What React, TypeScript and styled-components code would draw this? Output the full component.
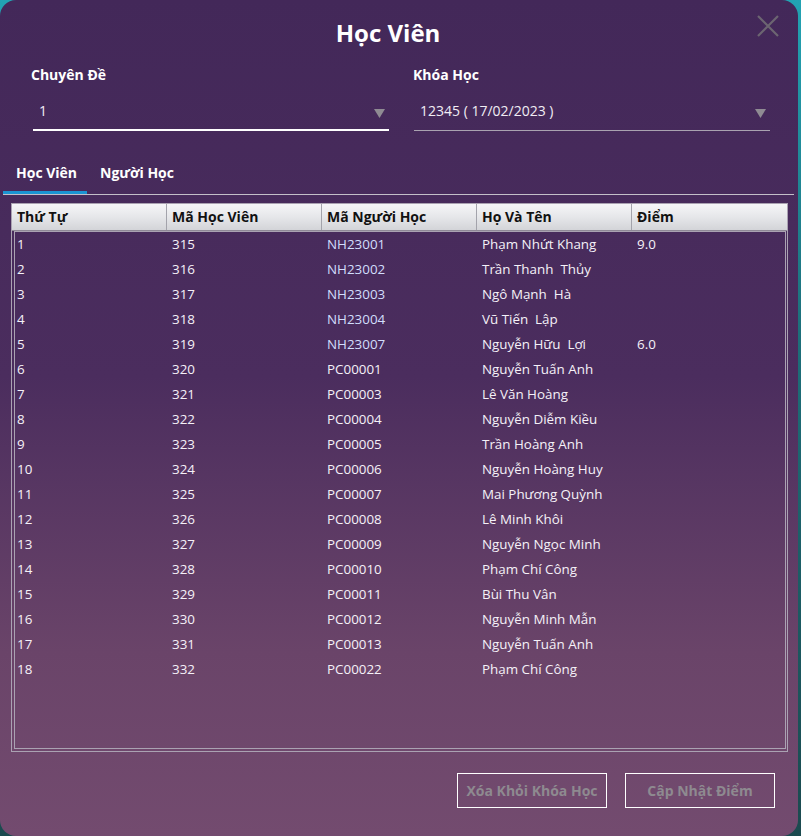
import React from 'react';
import styled, { createGlobalStyle } from 'styled-components';

const GlobalStyle = createGlobalStyle`
  html, body {
    margin: 0;
    padding: 0;
  }
  body {
    background: linear-gradient(180deg, #22a3b3 0%, #1d6f7a 40%, #1b4a4f 100%);
    font-family: "Open Sans", "Noto Sans", sans-serif;
    overflow: hidden;
  }
`;

const Window = styled.div`
  width: 798px;
  height: 836px;
  box-sizing: border-box;
  border-radius: 16px;
  background: linear-gradient(180deg, #432859 0%, #4b2d5e 45%, #6a4469 78%, #734b6f 100%);
  display: flex;
  flex-direction: column;
  color: #fff;
`;

const Header = styled.div`
  height: 65px;
  padding-right: 22px;
  display: grid;
  grid-template-columns: 1fr auto 1fr;
  align-items: start;
`;

const Title = styled.h1`
  grid-column: 2;
  margin: 0;
  font-size: 24px;
  font-weight: 700;
  line-height: 66px;
  letter-spacing: 0;
`;

const CloseButton = styled.button`
  grid-column: 3;
  justify-self: end;
  margin: 15px -3px 0 0;
  padding: 0;
  width: 22px;
  height: 22px;
  border: none;
  background: none;
  cursor: pointer;
  display: flex;
`;

const Fields = styled.div`
  display: grid;
  grid-template-columns: 358px 357px;
  column-gap: 24px;
  padding-left: 31px;
`;

const Field = styled.div`
  display: flex;
  flex-direction: column;
`;

const Label = styled.label`
  font-size: 14px;
  font-weight: 700;
  line-height: 20px;
`;

const Combo = styled.div<{ $focused?: boolean }>`
  margin: 16px 0 0 ${p => (p.$focused ? 2 : 1)}px;
  padding: 0 4px ${p => (p.$focused ? 8 : 9)}px 6px;
  display: flex;
  align-items: center;
  justify-content: space-between;
  border-bottom: ${p => (p.$focused ? '2px solid #ffffff' : '1px solid #a9a2b0')};
  font-size: 14px;
  line-height: 20px;
  color: #f1edf4;
`;

const Arrow = styled.svg`
  margin-top: 4px;
`;

const TabBar = styled.div`
  margin: 32px 4px 0 3px;
  display: flex;
  border-bottom: 1px solid #c4bfc9;
`;

const Tab = styled.div<{ $active?: boolean }>`
  padding: 0 10px 8px 13px;
  font-size: 14px;
  font-weight: 700;
  line-height: 20px;
  color: #fff;
  border-bottom: 3px solid ${p => (p.$active ? '#1b94d2' : 'transparent')};
`;

const TablePane = styled.div`
  margin: 8px 0 0 11px;
  width: 777px;
  height: 549px;
  box-sizing: border-box;
  border: 1px solid #aaa2b2;
  display: flex;
  flex-direction: column;
`;

const HeaderRow = styled.div`
  height: 26px;
  display: grid;
  grid-template-columns: repeat(5, 155px);
  background: linear-gradient(180deg, #f6f6f8 0%, #e4e5e8 55%, #d3d4d8 100%);
  border-bottom: 1px solid #8e8896;
`;

const HeaderCell = styled.div`
  padding-left: 5px;
  font-size: 14px;
  font-weight: 700;
  line-height: 26px;
  color: #111;
  border-right: 1px solid #a3a3ab;
  &:last-child {
    border-right: none;
  }
`;

const Body = styled.div`
  flex: 1;
  margin: 0 1px 2px 2px;
  border: 1px solid #aaa2b2;
`;

const Row = styled.div`
  display: grid;
  grid-template-columns: 151px 155px 155px 155px 1fr;
  height: 25px;
`;

const Cell = styled.div<{ $code?: boolean }>`
  padding-left: 6px;
  font-size: 13.4px;
  line-height: 25px;
  white-space: pre;
  color: ${p => (p.$code ? '#d2defc' : '#f5f1f8')};
  &:first-child {
    padding-left: 2px;
  }
`;

const Footer = styled.div`
  margin-top: 21px;
  padding-right: 23px;
  display: flex;
  justify-content: flex-end;
  gap: 18px;
`;

const ActionButton = styled.button`
  width: 150px;
  height: 35px;
  box-sizing: border-box;
  border: 1px solid #ffffff;
  background: transparent;
  color: #8e8a90;
  font-family: "Open Sans", "Noto Sans", sans-serif;
  font-size: 14px;
  font-weight: 700;
  cursor: default;
`;

const rows: [string, string, string, string, string][] = [
  ['1', '315', 'NH23001', 'Phạm Nhứt Khang', '9.0'],
  ['2', '316', 'NH23002', 'Trần Thanh  Thủy', ''],
  ['3', '317', 'NH23003', 'Ngô Mạnh  Hà', ''],
  ['4', '318', 'NH23004', 'Vũ Tiến  Lập', ''],
  ['5', '319', 'NH23007', 'Nguyễn Hữu  Lợi', '6.0'],
  ['6', '320', 'PC00001', 'Nguyễn Tuấn Anh', ''],
  ['7', '321', 'PC00003', 'Lê Văn Hoàng', ''],
  ['8', '322', 'PC00004', 'Nguyễn Diễm Kiều', ''],
  ['9', '323', 'PC00005', 'Trần Hoàng Anh', ''],
  ['10', '324', 'PC00006', 'Nguyễn Hoàng Huy', ''],
  ['11', '325', 'PC00007', 'Mai Phương Quỳnh', ''],
  ['12', '326', 'PC00008', 'Lê Minh Khôi', ''],
  ['13', '327', 'PC00009', 'Nguyễn Ngọc Minh', ''],
  ['14', '328', 'PC00010', 'Phạm Chí Công', ''],
  ['15', '329', 'PC00011', 'Bùi Thu Vân', ''],
  ['16', '330', 'PC00012', 'Nguyễn Minh Mẫn', ''],
  ['17', '331', 'PC00013', 'Nguyễn Tuấn Anh', ''],
  ['18', '332', 'PC00022', 'Phạm Chí Công', ''],
];

const columns = ['Thứ Tự', 'Mã Học Viên', 'Mã Người Học', 'Họ Và Tên', 'Điểm'];

const DownArrow = () => (
  <Arrow width="11" height="9" viewBox="0 0 11 9">
    <polygon points="0,0 11,0 5.5,9" fill="#8f8b93" />
  </Arrow>
);

const App: React.FC = () => {
  return (
    <>
      <GlobalStyle />
      <Window>
        <Header>
          <Title>Học Viên</Title>
          <CloseButton aria-label="Đóng">
            <svg width="22" height="22" viewBox="0 0 22 22">
              <path d="M1 1 L21 21 M21 1 L1 21" stroke="#6c6571" strokeWidth="2.2" />
            </svg>
          </CloseButton>
        </Header>

        <Fields>
          <Field>
            <Label>Chuyên Đề</Label>
            <Combo $focused>
              <span>1</span>
              <DownArrow />
            </Combo>
          </Field>
          <Field>
            <Label>Khóa Học</Label>
            <Combo>
              <span>12345 ( 17/02/2023 )</span>
              <DownArrow />
            </Combo>
          </Field>
        </Fields>

        <TabBar>
          <Tab $active>Học Viên</Tab>
          <Tab>Người Học</Tab>
        </TabBar>

        <TablePane>
          <HeaderRow>
            {columns.map(c => (
              <HeaderCell key={c}>{c}</HeaderCell>
            ))}
          </HeaderRow>
          <Body>
            {rows.map(r => (
              <Row key={r[0]}>
                <Cell>{r[0]}</Cell>
                <Cell>{r[1]}</Cell>
                <Cell $code={r[2].startsWith('NH')}>{r[2]}</Cell>
                <Cell>{r[3]}</Cell>
                <Cell>{r[4]}</Cell>
              </Row>
            ))}
          </Body>
        </TablePane>

        <Footer>
          <ActionButton>Xóa Khỏi Khóa Học</ActionButton>
          <ActionButton>Cập Nhật Điểm</ActionButton>
        </Footer>
      </Window>
    </>
  );
};

export default App;
